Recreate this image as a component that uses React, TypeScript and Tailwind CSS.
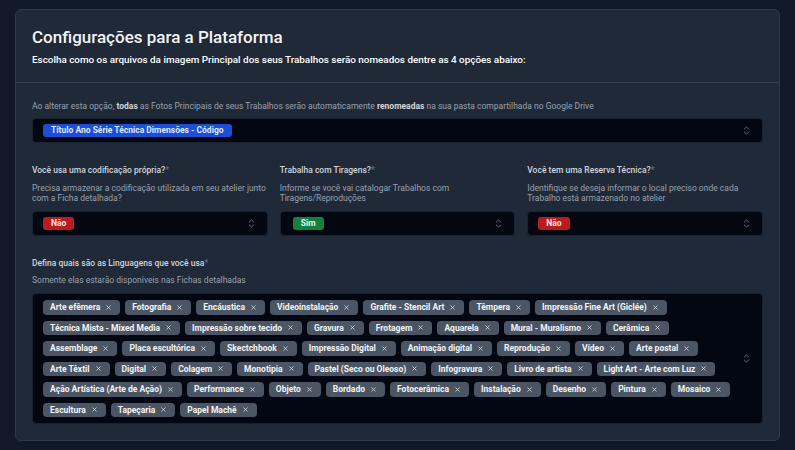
import React from "react";
import { ChevronsUpDown, X } from "lucide-react";

const linguagens = [
  "Arte efêmera",
  "Fotografia",
  "Encáustica",
  "Videoinstalação",
  "Grafite - Stencil Art",
  "Têmpera",
  "Impressão Fine Art (Giclée)",
  "Técnica Mista - Mixed Media",
  "Impressão sobre tecido",
  "Gravura",
  "Frotagem",
  "Aquarela",
  "Mural - Muralismo",
  "Cerâmica",
  "Assemblage",
  "Placa escultórica",
  "Skectchbook",
  "Impressão Digital",
  "Animação digital",
  "Reprodução",
  "Vídeo",
  "Arte postal",
  "Arte Têxtil",
  "Digital",
  "Colagem",
  "Monotipia",
  "Pastel (Seco ou Oleoso)",
  "Infogravura",
  "Livro de artista",
  "Light Art - Arte com Luz",
  "Ação Artística (Arte de Ação)",
  "Performance",
  "Objeto",
  "Bordado",
  "Fotocerâmica",
  "Instalação",
  "Desenho",
  "Pintura",
  "Mosaico",
  "Escultura",
  "Tapeçaria",
  "Papel Machê",
];

function Badge({ label, tone }: { label: string; tone: "red" | "green" | "blue" }) {
  const cls =
    tone === "red"
      ? "bg-[#b91c1c] text-red-100"
      : tone === "green"
      ? "bg-[#15803d] text-green-100"
      : "bg-[#1d4ed8] text-blue-100";
  return (
    <span className={"inline-flex h-[13px] items-center rounded-[3px] px-[8px] text-[8.5px] font-bold leading-none " + cls}>
      {label}
    </span>
  );
}

function SelectBox({ children, inset = "pl-[10px]" }: { children: React.ReactNode; inset?: string }) {
  return (
    <div className={"flex h-[25px] items-center justify-between rounded-[4px] border border-[#1a2232] bg-[#030712] pr-[10px] " + inset}>
      <div className="flex items-center">{children}</div>
      <ChevronsUpDown className="h-[11px] w-[11px] text-gray-500" strokeWidth={2} />
    </div>
  );
}

function Campo({
  titulo,
  descricao,
  valor,
}: {
  titulo: string;
  descricao: string;
  valor: "Sim" | "Não";
}) {
  return (
    <div className="flex flex-col">
      <label className="text-[8.5px] font-medium leading-[14px] text-gray-300">
        {titulo}
        <span className="text-gray-500">*</span>
      </label>
      <p className="mt-[6px] h-[20px] text-[8.5px] leading-[10px] text-gray-400">{descricao}</p>
      <div className="mt-[8px]">
        <SelectBox inset={valor === "Sim" ? "pl-[12px]" : "pl-[10px]"}>
          <Badge label={valor} tone={valor === "Sim" ? "green" : "red"} />
        </SelectBox>
      </div>
    </div>
  );
}

export default function App() {
  return (
    <div
      className="min-h-[450px] bg-[#111827] px-[15px] pt-[9px] pb-[10px]"
      style={{ fontFamily: "Roboto, 'Noto Sans', sans-serif" }}
    >
      <div className="rounded-[6px] border border-[#2f3a4a] bg-[#1f2937]">
        <div className="border-b border-[#374151] px-[16px] pt-[16px] pb-[15px]">
          <h1 className="text-[17px] font-medium leading-[22px] text-gray-100">
            Configurações para a Plataforma
          </h1>
          <p className="mt-[5px] text-[9.9px] font-medium leading-[14px] text-white">
            Escolha como os arquivos da imagem Principal dos seus Trabalhos serão nomeados dentre as 4 opções abaixo:
          </p>
        </div>

        <div className="px-[16px] pt-[16px] pb-[16px]">
          <p className="text-[8.5px] leading-[14px] text-gray-400">
            Ao alterar esta opção, <strong className="font-bold text-gray-300">todas</strong> as Fotos Principais de seus Trabalhos serão automaticamente{" "}
            <strong className="font-bold text-gray-300">renomeadas</strong> na sua pasta compartilhada no Google Drive
          </p>
          <div className="mt-[5px]">
            <SelectBox>
              <Badge label="Título Ano Série Técnica Dimensões - Código" tone="blue" />
            </SelectBox>
          </div>

          <div className="mt-[20px] grid grid-cols-3 gap-x-[12px]">
            <Campo
              titulo="Você usa uma codificação própria?"
              descricao="Precisa armazenar a codificação utilizada em seu atelier junto com a Ficha detalhada?"
              valor="Não"
            />
            <Campo
              titulo="Trabalha com Tiragens?"
              descricao="Informe se você vai catalogar Trabalhos com Tiragens/Reproduções"
              valor="Sim"
            />
            <Campo
              titulo="Você tem uma Reserva Técnica?"
              descricao="Identifique se deseja informar o local preciso onde cada Trabalho está armazenado no atelier"
              valor="Não"
            />
          </div>

          <div className="mt-[20px]">
            <label className="block text-[8.5px] font-medium leading-[14px] text-gray-300">
              Defina quais são as Linguagens que você usa<span className="text-gray-500">*</span>
            </label>
            <p className="mt-[3px] text-[8.5px] leading-[14px] text-gray-400">
              Somente elas estarão disponíveis nas Fichas detalhadas
            </p>
            <div className="mt-[6px] flex items-center rounded-[4px] border border-[#1a2232] bg-[#030712] pl-[10px] pr-[10px] pt-[6px] pb-[6px]">
              <div className="flex flex-1 flex-wrap gap-x-[5px] gap-y-[6px]">
                {linguagens.map((l) => (
                  <span
                    key={l}
                    className="inline-flex h-[14.5px] items-center gap-[5px] rounded-[4px] bg-[#4b5563] pl-[7px] pr-[8px] text-[8.5px] font-bold leading-none text-gray-100"
                  >
                    {l}
                    <X className="h-[7px] w-[7px] text-gray-200" strokeWidth={2.5} />
                  </span>
                ))}
              </div>
              <ChevronsUpDown className="ml-[8px] h-[11px] w-[11px] text-gray-500" strokeWidth={2} />
            </div>
          </div>
        </div>
      </div>
    </div>
  );
}
